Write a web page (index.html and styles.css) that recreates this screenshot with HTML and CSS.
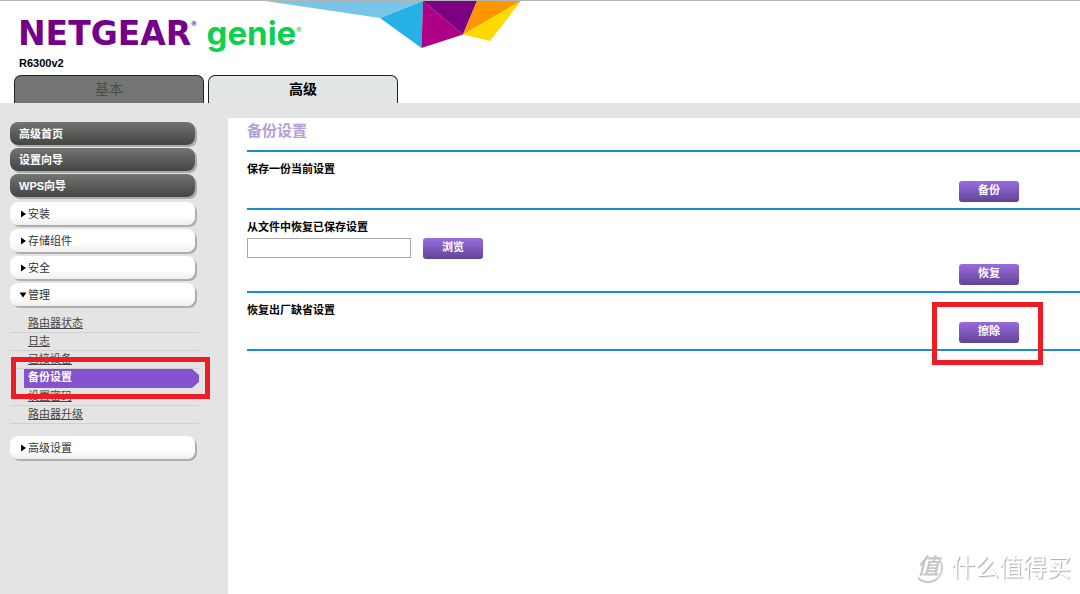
FILE: index.html
```html
<!DOCTYPE html>
<html lang="zh-CN">
<head>
<meta charset="utf-8">
<meta name="viewport" content="width=device-width, initial-scale=1">
<title>NETGEAR genie R6300v2</title>
<link rel="stylesheet" href="styles.css">
</head>
<body>
<header class="header">
  <svg class="prism" width="260" height="50" viewBox="265 0 260 50" aria-hidden="true">
    <path fill="#79c5e8" d="M265 0H423L380 17Z"/>
    <path fill="#26b1e6" d="M380 17L423 0L421.500 47Z"/>
    <path fill="#ad0085" d="M423 0L421.500 47L463 33.500Z"/>
    <path fill="#7c0082" d="M423 0H477L463 33.500Z"/>
    <path fill="#ff9500" d="M477 0H521L463 33.500Z"/>
    <path fill="#ffd900" d="M521 0L490 40L463 33.500Z"/>
  </svg>
  <div class="logo">
    <span class="brand">NETGEAR</span><span class="reg reg-brand">®</span>
    <span class="product">genie</span><span class="reg reg-product">®</span>
  </div>
  <div class="model">R6300v2</div>
  <nav class="tabs">
    <button class="tab" type="button">基本</button>
    <button class="tab tab-active" type="button">高级</button>
  </nav>
</header>
<div class="body">
  <nav class="sidebar">
    <div class="group">
      <button class="item item-dark" type="button">高级首页</button>
      <button class="item item-dark" type="button">设置向导</button>
      <button class="item item-dark" type="button">WPS向导</button>
    </div>
    <div class="group group-light">
      <button class="item item-light" type="button"><svg class="arrow" viewBox="0 0 8 8"><path d="M2 0.500L7 4L2 7.500Z"/></svg>安装</button>
      <button class="item item-light" type="button"><svg class="arrow" viewBox="0 0 8 8"><path d="M2 0.500L7 4L2 7.500Z"/></svg>存储组件</button>
      <button class="item item-light" type="button"><svg class="arrow" viewBox="0 0 8 8"><path d="M2 0.500L7 4L2 7.500Z"/></svg>安全</button>
      <button class="item item-light" type="button"><svg class="arrow" viewBox="0 0 8 8"><path d="M0.500 1.500H7.500L4 6.500Z"/></svg>管理</button>
    </div>
    <ul class="submenu">
      <li class="sub"><a href="#">路由器状态</a></li>
      <li class="sub"><a href="#">日志</a></li>
      <li class="sub"><a href="#">已接设备</a></li>
      <li class="sub sub-active"><a href="#">备份设置</a><span class="mark mark-menu"></span></li>
      <li class="sub"><a href="#">设置密码</a></li>
      <li class="sub"><a href="#">路由器升级</a></li>
    </ul>
    <button class="item item-light" type="button"><svg class="arrow" viewBox="0 0 8 8"><path d="M2 0.500L7 4L2 7.500Z"/></svg>高级设置</button>
  </nav>
  <main class="content">
    <h1 class="title">备份设置</h1>
    <section class="section">
      <h2 class="label">保存一份当前设置</h2>
      <div class="actions"><button class="btn" type="button">备份</button></div>
    </section>
    <section class="section">
      <label class="label" for="file">从文件中恢复已保存设置</label>
      <div class="file-row">
        <input class="file" id="file" type="text">
        <button class="btn" type="button">浏览</button>
      </div>
      <div class="actions"><button class="btn" type="button">恢复</button></div>
    </section>
    <section class="section">
      <h2 class="label">恢复出厂缺省设置</h2>
      <div class="actions"><span class="marked"><button class="btn" type="button">擦除</button><span class="mark mark-btn"></span></span></div>
    </section>
  </main>
</div>
<div class="watermark">
  <span class="seal">值</span>
  <span>什么值得买</span>
</div>
</body>
</html>
```
FILE: styles.css
```css
* {
  box-sizing: border-box;
}

body {
  margin: 0;
  min-height: 100vh;
  display: flex;
  flex-direction: column;
  background: #e4e4e4;
  color: #000;
  font: 11px/16px "Liberation Sans", "Noto Sans CJK SC", sans-serif;
}

button,
input {
  font: inherit;
  margin: 0;
}

.header {
  position: relative;
  background: #fff;
  border-top: 1px solid #b4b4b4;
  padding: 14px 14px 0;
}

.prism {
  position: absolute;
  left: 265px;
  top: 0;
}

.logo {
  position: relative;
  display: flex;
  align-items: baseline;
  padding-left: 4px;
  height: 39px;
  font-family: "DejaVu Sans", sans-serif;
  font-weight: 700;
  line-height: 36px;
}

.brand {
  color: #75008a;
  font-size: 33px;
}

.product {
  color: #0bd14f;
  font-family: Inter, sans-serif;
  font-size: 33px;
  margin-left: 10px;
}

.reg {
  align-self: flex-start;
  font-family: Inter, sans-serif;
  font-size: 8px;
  line-height: 12px;
}

.reg-brand {
  color: #75008a;
  padding-top: 3px;
}

.reg-product {
  color: #0bd14f;
  padding-top: 9px;
}

.model {
  padding-left: 5px;
  font-weight: 700;
  line-height: 18px;
}

.tabs {
  display: flex;
  gap: 4px;
  padding-top: 3px;
}

.tab {
  width: 190px;
  height: 28px;
  padding: 0 0 2px;
  border: 1px solid #222;
  border-bottom: 0;
  border-radius: 7px 7px 0 0;
  background: #747673;
  color: #4b4b4b;
  font-size: 14px;
  line-height: 20px;
}

.tab-active {
  background: #e1e6e2;
  color: #000;
  font-weight: 700;
}

.body {
  flex: 1;
  display: flex;
}

.sidebar {
  flex: none;
  width: 228px;
  padding: 19px 29px 0 10px;
}

.group {
  display: flex;
  flex-direction: column;
  gap: 3px;
}

.group-light {
  gap: 4px;
  padding-top: 5px;
}

.item {
  display: flex;
  align-items: center;
  width: 185px;
  height: 23px;
  padding: 0 9px;
  border: 0;
  border-radius: 8px;
  text-align: left;
}

.item-dark {
  background: linear-gradient(#737573, #434542);
  box-shadow: 2px 2px 0 #aaa;
  color: #fff;
  font-weight: 700;
}

.item-light {
  background: linear-gradient(#fff 60%, #efefef);
  box-shadow: 2px 2px 0 #aeaeae;
  color: #333;
}

.arrow {
  width: 8px;
  height: 8px;
  margin-right: 1px;
  fill: #000;
}

.submenu {
  list-style: none;
  margin: 0;
  padding: 9px 0 12px;
}

.sub {
  position: relative;
  height: 18px;
  padding-left: 18px;
  border-bottom: 1px solid #d2d2d2;
}

.sub a {
  color: #444;
  text-underline-offset: 1px;
}

.sub-active {
  height: 19px;
  padding-left: 14px;
  border-bottom: 0;
}

.sub-active a {
  display: block;
  padding: 0 4px 3px;
  background: #8552d0;
  clip-path: polygon(0 0, 96% 0, 100% 32%, 100% 68%, 96% 100%, 0 100%);
  color: #fff;
  font-weight: 700;
  text-decoration: none;
}

.marked {
  position: relative;
  display: flex;
}

.mark {
  position: absolute;
  border: 5px solid #ee1c24;
  pointer-events: none;
}

.mark-menu {
  inset: -12px -11px -11px 1px;
  z-index: 1;
}

.mark-btn {
  inset: -20px -24px -22px -27px;
}

.content {
  flex: 1;
  margin-top: 15px;
  padding-left: 19px;
  background: #fff;
}

.title {
  margin: 0;
  padding: 3px 0 9px;
  border-bottom: 2px solid #168fcf;
  color: #b39ddb;
  font-size: 15px;
  line-height: 20px;
}

.section {
  padding: 9px 0 6px;
  border-bottom: 2px solid #168fcf;
}

.label {
  display: block;
  margin: 0;
  font-size: 11px;
  font-weight: 700;
  line-height: 16px;
}

.actions {
  display: flex;
  justify-content: flex-end;
  padding: 4px 61px 0 0;
}

.file-row {
  display: flex;
  align-items: flex-start;
  gap: 12px;
  padding: 3px 0 1px;
}

.file {
  width: 164px;
  height: 20px;
  padding: 1px 4px;
  border: 1px solid #aaa;
  background: #fff;
}

.btn {
  width: 60px;
  height: 21px;
  padding: 0 0 3px;
  border: 0;
  border-radius: 3px;
  background: linear-gradient(#9a6ce0, #604494);
  color: #fff;
  font-weight: 700;
  line-height: 18px;
}

.watermark {
  position: fixed;
  right: 9px;
  bottom: 8px;
  display: flex;
  align-items: center;
  gap: 8px;
  color: #fff;
  font-size: 24px;
  line-height: 36px;
  text-shadow: 1px 1px 1px #aaa;
}

.seal {
  width: 30px;
  height: 30px;
  border: 2px solid transparent;
  border-right-color: #d0d0d0;
  border-bottom-color: #c4c4c4;
  border-radius: 50%;
  color: #c8c8c8;
  font-size: 22px;
  font-style: italic;
  font-weight: 700;
  line-height: 24px;
  text-align: center;
  text-shadow: none;
}
```
